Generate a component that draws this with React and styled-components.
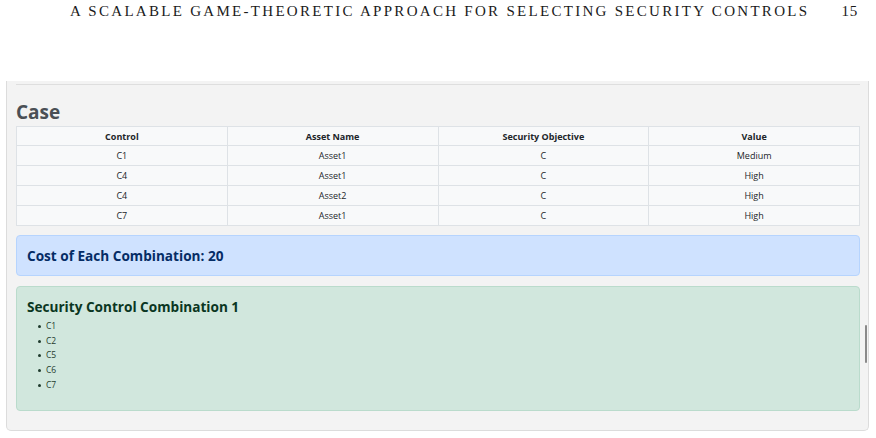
import React from 'react';
import styled, { createGlobalStyle } from 'styled-components';

const GlobalStyle = createGlobalStyle`
  html, body {
    margin: 0;
    padding: 0;
    background: #ffffff;
  }
`;

const Page = styled.div`
  width: 876px;
  height: 438px;
  overflow: hidden;
  background: #fff;
`;

const RunningHead = styled.div`
  display: flex;
  align-items: baseline;
  padding: 3px 18px 0 70px;
  height: 78px;
  box-sizing: border-box;
  font-family: "Liberation Serif", "DejaVu Serif", serif;
  font-size: 15px;
  color: #1a1a1a;
`;

const HeadTitle = styled.span`
  flex: 1;
  letter-spacing: 2.29px;
  white-space: nowrap;
`;

const PageNum = styled.span`
  letter-spacing: 0.8px;
`;

const Shot = styled.div`
  position: relative;
  margin: 3px 0 0 6px;
  width: 863px;
  height: 350px;
  box-sizing: border-box;
  padding: 3px 8px 0 9px;
  background: #f3f3f3;
  border: 1px solid #dcdcdc;
  border-top: none;
  border-radius: 0 0 5px 5px;
  font-family: "Open Sans", "Noto Sans", sans-serif;
  color: #212529;
`;

const Rule = styled.div`
  height: 1px;
  background: #dedede;
`;

const CaseTitle = styled.h2`
  margin: 15px 0 0;
  font-size: 19px;
  line-height: 24px;
  font-weight: 700;
  color: #4a4f55;
`;

const Table = styled.table`
  margin-top: 2px;
  width: 844px;
  border-collapse: collapse;
  table-layout: fixed;
  background: #f8f9fa;
  font-size: 9px;
`;

const Th = styled.th`
  height: 18px;
  padding: 0;
  border: 1px solid #dee2e6;
  font-weight: 700;
  text-align: center;
`;

const Td = styled.td`
  height: 19px;
  padding: 0;
  border: 1px solid #dee2e6;
  text-align: center;
`;

const Alert = styled.div`
  margin-top: ${p => p.$gap}px;
  box-sizing: border-box;
  border-radius: 4px;
  padding: 10px;
  height: ${p => p.$h}px;
  background: ${p => (p.$tone === 'blue' ? '#cfe2ff' : '#d1e7dd')};
  border: 1px solid ${p => (p.$tone === 'blue' ? '#b6d4fe' : '#badbcc')};
  color: ${p => (p.$tone === 'blue' ? '#052c65' : '#0a3622')};
`;

const AlertTitle = styled.h4`
  margin: 0;
  font-size: 13.6px;
  line-height: 20px;
  font-weight: 700;
`;

const ComboList = styled.ul`
  margin: 2px 0 0;
  padding-left: 19px;
  font-size: 8.5px;
  line-height: 14.7px;
  color: #1f3b2d;
  list-style: none;
`;

const ComboItem = styled.li`
  position: relative;

  &::before {
    content: '';
    position: absolute;
    left: -8.5px;
    top: 6px;
    width: 3px;
    height: 3px;
    border-radius: 50%;
    background: #1f3b2d;
  }
`;

const Scrollbar = styled.div`
  position: absolute;
  right: 1px;
  top: 244px;
  width: 2px;
  height: 38px;
  background: #8a8a8a;
  border-radius: 1px;
`;

const rows = [
  ['C1', 'Asset1', 'C', 'Medium'],
  ['C4', 'Asset1', 'C', 'High'],
  ['C4', 'Asset2', 'C', 'High'],
  ['C7', 'Asset1', 'C', 'High'],
];

const combo = ['C1', 'C2', 'C5', 'C6', 'C7'];

export default function App() {
  return (
    <Page>
      <GlobalStyle />
      <RunningHead>
        <HeadTitle>A SCALABLE GAME-THEORETIC APPROACH FOR SELECTING SECURITY CONTROLS</HeadTitle>
        <PageNum>15</PageNum>
      </RunningHead>
      <Shot>
        <Rule />
        <CaseTitle>Case</CaseTitle>
        <Table>
          <thead>
            <tr>
              <Th>Control</Th>
              <Th>Asset Name</Th>
              <Th>Security Objective</Th>
              <Th>Value</Th>
            </tr>
          </thead>
          <tbody>
            {rows.map((r, i) => (
              <tr key={i}>
                {r.map((c, j) => <Td key={j}>{c}</Td>)}
              </tr>
            ))}
          </tbody>
        </Table>
        <Alert $tone="blue" $h={41} $gap={9}>
          <AlertTitle>Cost of Each Combination: 20</AlertTitle>
        </Alert>
        <Alert $tone="green" $h={125} $gap={10}>
          <AlertTitle>Security Control Combination 1</AlertTitle>
          <ComboList>
            {combo.map(c => <ComboItem key={c}>{c}</ComboItem>)}
          </ComboList>
        </Alert>
        <Scrollbar />
      </Shot>
    </Page>
  );
}
